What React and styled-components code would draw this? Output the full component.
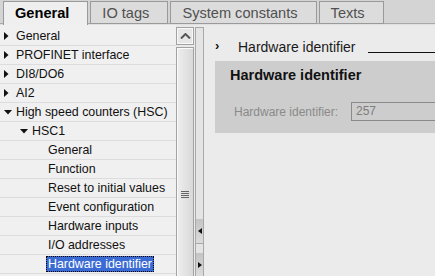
import styled, { createGlobalStyle } from "styled-components";

const GlobalStyle = createGlobalStyle`
    html, body {
        margin: 0;
        padding: 0;
        background: #ebebeb;
    }
    body {
        font-family: "Liberation Sans", Arial, sans-serif;
    }
`;

const tabs = [
    { label: "General", active: true },
    { label: "IO tags" },
    { label: "System constants" },
    { label: "Texts" }
];

const treeItems = [
    { label: "General", level: 0, arrow: "closed" },
    { label: "PROFINET interface", level: 0, arrow: "closed" },
    { label: "DI8/DO6", level: 0, arrow: "closed" },
    { label: "AI2", level: 0, arrow: "closed" },
    { label: "High speed counters (HSC)", level: 0, arrow: "open" },
    { label: "HSC1", level: 1, arrow: "open" },
    { label: "General", level: 2 },
    { label: "Function", level: 2 },
    { label: "Reset to initial values", level: 2 },
    { label: "Event configuration", level: 2 },
    { label: "Hardware inputs", level: 2 },
    { label: "I/O addresses", level: 2 },
    { label: "Hardware identifier", level: 2, selected: true }
];

function TreeArrow({ type }) {
    if (type === "open") {
        return (
            <svg width="8" height="5" viewBox="0 0 8 5">
                <path d="M0 0 L8 0 L4 4.5 Z" fill="#111" />
            </svg>
        );
    }
    return (
        <svg width="5" height="8" viewBox="0 0 5 8">
            <path d="M0 0 L4.5 4 L0 8 Z" fill="#111" />
        </svg>
    );
}

function App() {
    return (
        <Screen>
            <GlobalStyle />
            <TabBar>
                {tabs.map((t) => (
                    <Tab key={t.label} $active={t.active}>{t.label}</Tab>
                ))}
            </TabBar>
            <Body>
                <Tree>
                    {treeItems.map((item, i) => (
                        <TreeRow key={i} $level={item.level}>
                            <ArrowBox>
                                {item.arrow && <TreeArrow type={item.arrow} />}
                            </ArrowBox>
                            <TreeLabel $selected={item.selected}>{item.label}</TreeLabel>
                        </TreeRow>
                    ))}
                </Tree>
                <ScrollBar>
                    <UpButton>
                        <svg width="11" height="6" viewBox="0 0 11 6">
                            <path d="M1 5.5 L5.5 1 L10 5.5" stroke="#555" strokeWidth="2" fill="none" />
                        </svg>
                    </UpButton>
                    <Thumb>
                        <Grip />
                    </Thumb>
                </ScrollBar>
                <Splitter>
                    <SplitterFill />
                    <SplitterButton>
                        <svg width="4" height="6" viewBox="0 0 4 6">
                            <path d="M4 0 L0 3 L4 6 Z" fill="#111" />
                        </svg>
                    </SplitterButton>
                    <SplitterGap />
                    <SplitterButton $last>
                        <svg width="4" height="6" viewBox="0 0 4 6">
                            <path d="M0 0 L4 3 L0 6 Z" fill="#111" />
                        </svg>
                    </SplitterButton>
                </Splitter>
                <Content>
                    <SectionHeader>
                        <Chevron>›</Chevron>
                        <SectionTitle>Hardware identifier</SectionTitle>
                        <SectionRule />
                    </SectionHeader>
                    <GroupBox>
                        <GroupTitle>Hardware identifier</GroupTitle>
                        <FieldRow>
                            <FieldLabel>Hardware identifier:</FieldLabel>
                            <FieldValue>257</FieldValue>
                        </FieldRow>
                    </GroupBox>
                </Content>
            </Body>
        </Screen>
    );
}

const Screen = styled.div`
    width: 435px;
    height: 276px;
    overflow: hidden;
    display: flex;
    flex-direction: column;
    background: #ebebeb;
`;

const TabBar = styled.div`
    height: 25px;
    flex: none;
    display: flex;
    align-items: flex-start;
    gap: 2px;
    padding: 1px 0 0 3px;
    box-sizing: border-box;
    background: linear-gradient(to bottom, #d4d4d4 0, #d4d4d4 23px, #a8a8a8 23px, #a8a8a8 24px, #e0e0e0 24px);
`;

const Tab = styled.div`
    box-sizing: border-box;
    height: ${(p) => (p.$active ? "24px" : "23px")};
    padding: 2px 18px 0 11px;
    border: 1px solid #9a9a9a;
    border-bottom: ${(p) => (p.$active ? "none" : "1px solid #9a9a9a")};
    background: ${(p) => (p.$active ? "#efefef" : "#dcdcdc")};
    color: ${(p) => (p.$active ? "#000" : "#505050")};
    font-weight: ${(p) => (p.$active ? "bold" : "normal")};
    font-size: 14.6px;
    line-height: 18px;
    white-space: nowrap;
`;

const Body = styled.div`
    flex: 1;
    display: flex;
    min-height: 0;
`;

const Tree = styled.div`
    width: 176px;
    flex: none;
    background: #f0f0f0;
    padding-top: 2px;
    box-sizing: border-box;
`;

const TreeRow = styled.div`
    height: 19px;
    box-sizing: border-box;
    border-bottom: 1px solid #dddddd;
    display: flex;
    align-items: center;
    padding-left: ${(p) => p.$level * 16}px;
`;

const ArrowBox = styled.div`
    width: 16px;
    flex: none;
    display: flex;
    align-items: center;
    padding-left: 4px;
    box-sizing: border-box;
`;

const TreeLabel = styled.span`
    font-size: 12.4px;
    line-height: 14px;
    color: ${(p) => (p.$selected ? "#fff" : "#111")};
    background: ${(p) => (p.$selected ? "#3a6bd5" : "transparent")};
    border: 1px ${(p) => (p.$selected ? "dotted #000" : "solid transparent")};
    padding: 0 1px;
    margin-left: -2px;
    white-space: nowrap;
`;

const ScrollBar = styled.div`
    width: 18px;
    flex: none;
    background: #e9e9e9;
    padding-top: 2px;
    display: flex;
    flex-direction: column;
    gap: 2px;
    box-sizing: border-box;
`;

const UpButton = styled.div`
    height: 18px;
    box-sizing: border-box;
    border: 1px solid #a2a2a2;
    box-shadow: inset 0 0 0 1px #f8f8f8;
    background: #e6e6e6;
    display: flex;
    align-items: center;
    justify-content: center;
`;

const Thumb = styled.div`
    flex: 1;
    border: 1px solid #a2a2a2;
    border-bottom: none;
    box-shadow: inset 1px 1px 0 #fafafa;
    background: linear-gradient(to right, #eeeeee, #d9d9d9);
    display: flex;
    align-items: center;
    justify-content: center;
    padding-top: 64px;
`;

const Grip = styled.div`
    width: 8px;
    height: 7px;
    background: repeating-linear-gradient(to bottom, #666 0, #666 1px, transparent 1px, transparent 2px);
`;

const Splitter = styled.div`
    width: 9px;
    flex: none;
    margin-left: 1px;
    padding-top: 2px;
    display: flex;
    flex-direction: column;
    box-sizing: border-box;
    background: #ebebeb;
`;

const SplitterFill = styled.div`
    flex: 1;
    border: 1px solid #a8a8a8;
    border-bottom: none;
    background: #e4e4e4;
`;

const SplitterButton = styled.div`
    height: ${(p) => (p.$last ? "23px" : "24px")};
    border: 1px solid #a8a8a8;
    border-top: none;
    border-bottom: ${(p) => (p.$last ? "none" : "1px solid #a8a8a8")};
    background: linear-gradient(to bottom, #c4c4c4, #dcdcdc);
    display: flex;
    align-items: center;
    justify-content: center;
`;

const SplitterGap = styled.div`
    height: 9px;
    border: 1px solid #a8a8a8;
    border-top: none;
    border-bottom: none;
    background: #e4e4e4;
`;

const Content = styled.div`
    flex: 1;
    min-width: 0;
    background: #ebebeb;
    padding: 12px 0 0 11px;
    display: flex;
    flex-direction: column;
`;

const SectionHeader = styled.div`
    height: 19px;
    display: flex;
    align-items: center;
`;

const Chevron = styled.span`
    width: 23px;
    flex: none;
    font-size: 13px;
    font-weight: bold;
    color: #111;
    line-height: 14px;
    margin-top: -2px;
`;

const SectionTitle = styled.span`
    font-size: 14px;
    color: #1a1a1a;
    white-space: nowrap;
`;

const SectionRule = styled.div`
    flex: 1;
    align-self: flex-end;
    margin: 0 0 3px 12px;
    border-bottom: 1px solid #111;
`;

const GroupBox = styled.div`
    margin-top: 5px;
    height: 72px;
    background: #cdcdcd;
    padding: 5px 0 0 15px;
    box-sizing: border-box;
`;

const GroupTitle = styled.div`
    font-size: 14.5px;
    font-weight: bold;
    color: #111;
    line-height: 18px;
`;

const FieldRow = styled.div`
    margin-top: 18px;
    display: flex;
    align-items: center;
    padding-left: 4px;
`;

const FieldLabel = styled.span`
    width: 117px;
    flex: none;
    font-size: 12px;
    color: #8a8a8a;
`;

const FieldValue = styled.div`
    flex: 1;
    height: 19px;
    box-sizing: border-box;
    border: 1px solid #8a8a8a;
    border-right: none;
    font-size: 12px;
    color: #7d7d7d;
    padding-left: 4px;
    line-height: 17px;
`;

export default App;
